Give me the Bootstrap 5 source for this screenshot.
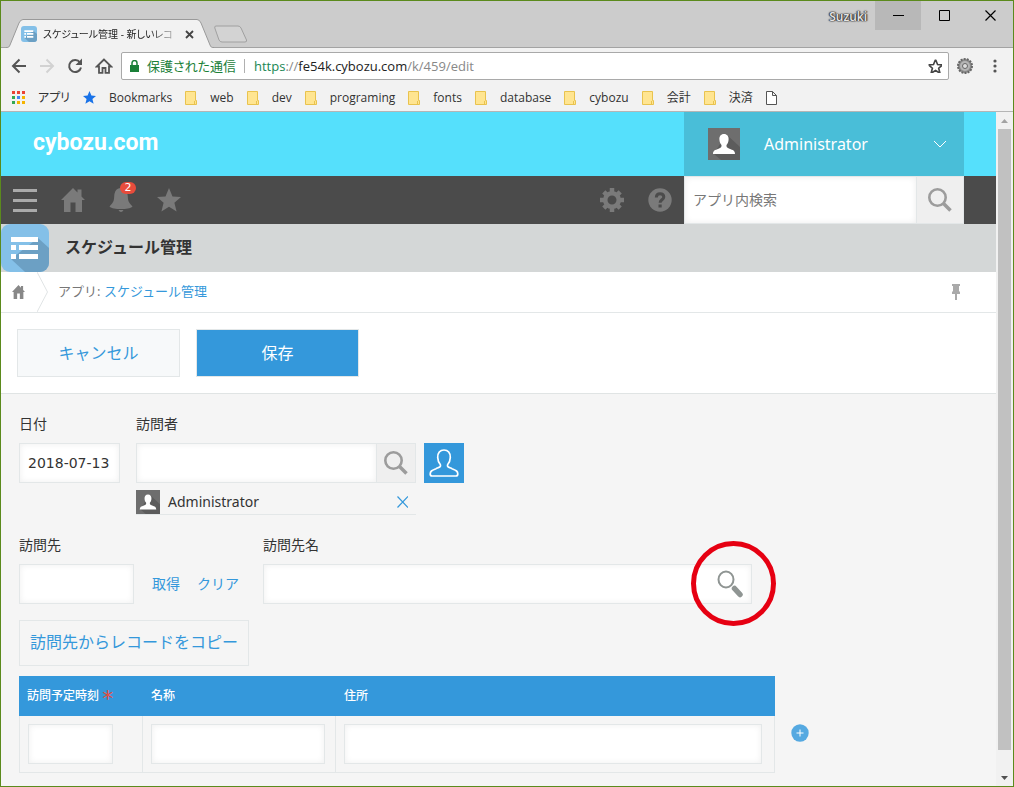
<!DOCTYPE html>
<html lang="ja">
<head>
<meta charset="utf-8">
<meta name="viewport" content="width=device-width, initial-scale=1">
<title>スケジュール管理 - 新しいレコード</title>
<link href="https://cdn.jsdelivr.net/npm/bootstrap@5.3.0/dist/css/bootstrap.min.css" rel="stylesheet">
<style>
  :root { --kt-blue: #3498db; --kt-line: #e3e7e8; --kt-ink: #333; }
  body { font-family: "Noto Sans", "Noto Sans CJK JP", sans-serif; font-size: 14px; line-height: 20px; color: var(--kt-ink); }
  a { color: var(--kt-blue); text-decoration: none; }
  svg { display: block; flex: none; }
  button { font: inherit; color: inherit; border: 0; background: none; padding: 0; }
  .window { min-height: 100vh; border: 1px solid #5b8a1c; background: #f2f2f2; }

  /* browser chrome */
  .chrome { font-family: "Open Sans", "Noto Sans CJK JP", sans-serif; font-size: 12px; line-height: 16px; font-feature-settings: "palt"; }
  .tab-strip { height: 47px; background: #ccc; border-bottom: 1px solid #a3a3a3; padding-left: 5px; }
  .page-tab { width: 208px; height: 29px; margin-bottom: -1px; padding: 1px 20px 0 15px; }
  .tab-shape { position: absolute; left: 0; top: 0; }
  .tab-title { font-size: 10px; margin-left: 6px; white-space: nowrap; color: #222; -webkit-mask-image: linear-gradient(to right, #000 108px, transparent 140px); }
  .profile { font-weight: 600; color: #e4e4e4; text-shadow: 0 0 1px #333, 0 0 2px #333, 1px 0 1px #444, -1px 0 1px #444; margin: 8px 8px 0 0; }
  .win-btn { width: 46px; height: 29px; }
  .win-btn.lit { background: #b8b8b8; }
  .tool-row { height: 36px; padding: 0 14px 0 10px; }
  .omnibox { height: 28px; background: #fff; border: 1px solid #a9a9a9; border-radius: 2px; font-size: 13px; line-height: 18px; padding: 0 6px 0 4px; margin-left: 8px; }
  .secure { color: #1a8038; border-right: 1px solid #b0b0b0; padding-right: 8px; margin-right: 9px; line-height: 14px; }
  .host { color: #222; }
  .rest { color: #888; }
  .bm-row { height: 28px; border-bottom: 1px solid #b5b5b5; gap: 13px; padding-left: 11px; }
  .bm-row a { gap: 13px; color: #333; white-space: nowrap; }

  /* portal header */
  .brand-bar { height: 64px; background: #55e0fc; padding: 0 32px; }
  .brand { color: #fff; font: 700 23px/32px "Roboto", sans-serif; padding-bottom: 2px; }
  .side-box { width: 280px; }
  .user-box { background: #49bed8; color: #fff; font-size: 16px; padding: 0 16px 0 24px; }
  .nav-dark { height: 48px; background: #4b4b4b; padding: 0 32px 0 11px; }
  .find-input { border: 1px solid var(--kt-line); background: #fff; box-shadow: inset 0 0 6px rgba(0,0,0,.08); padding: 0 8px; min-width: 0; outline: 0; }
  .find-input::placeholder { color: #777; }
  .find-btn { background: #efefef; border: 1px solid var(--kt-line); border-left: 0; display: flex; align-items: center; justify-content: center; }
  .nav-dark .find-btn { width: 47px; }
  .w-visitor .find-btn { width: 39px; }
  .count { position: absolute; left: 11px; top: -6px; width: 16px; height: 12px; border-radius: 6px; background: #e74c3c; color: #fff; font: 11px/12px "DejaVu Sans", sans-serif; text-align: center; }
  .app-bar { height: 48px; background: #d4d7d7; font-size: 16px; font-weight: 700; line-height: 24px; }
  .app-bar span { padding-bottom: 2px; }
  .crumbs { height: 41px; background: #fff; border-bottom: 1px solid var(--kt-line); font-size: 13px; color: #777; padding-left: 11px; }
  .crumb-text { margin-left: 9px; padding-bottom: 2px; }
  .actions { background: #fff; border-bottom: 1px solid #e0e4e4; padding: 16px; gap: 16px; }
  .act { width: 163px; height: 48px; border: 1px solid var(--kt-line); background: #f7f9fa; color: var(--kt-blue); font-size: 16px; }
  .act.save { background: var(--kt-blue); color: #fff; }

  /* record form */
  .record { background: #f5f5f5; padding: 20px 18px 13px; }
  .record label { display: block; margin-bottom: 9px; }
  .field { height: 40px; border: 1px solid var(--kt-line); background: #fff; box-shadow: inset 0 0 6px rgba(0,0,0,.07); border-radius: 0; padding: 0 8px; outline: 0; color: var(--kt-ink); }
  .w-date { width: 101px; font-family: "DejaVu Sans", sans-serif; }
  .w-visitor { width: 280px; }
  .w-dest { width: 115px; }
  .w-name { width: 489px; padding: 0 7px 0 0; }
  .picked { height: 25px; border-bottom: 1px solid var(--kt-line); margin-top: 7px; }
  .pick-user { width: 40px; height: 40px; background: var(--kt-blue); }
  .second-row { margin-top: 20px; gap: 24px; }
  .dest-links { gap: 17px; margin-left: 18px; }
  .bare { border: 0; background: transparent; outline: 0; padding: 0 8px; }
  .ring { position: absolute; right: -25px; top: -24px; pointer-events: none; }
  .copy { height: 46px; padding: 0 10px 2px; border: 1px solid var(--kt-line); color: var(--kt-blue); font-size: 16px; margin-top: 16px; }
  .rows { width: 756px; table-layout: fixed; border-collapse: separate; border-spacing: 0; margin-top: 10px; }
  .rows th { height: 40px; background: var(--kt-blue); color: #fff; font-size: 12px; font-weight: 500; padding: 0 8px; white-space: nowrap; }
  .rows td { border: solid var(--kt-line); border-width: 0 1px 1px 0; padding: 8px; line-height: 0; }
  .rows td:first-child { border-left-width: 1px; }
  .rows td .field { line-height: 20px; }
  .c-time { width: 124px; }
  .c-name { width: 193px; }
  .w-time { width: 85px; }
  .w-label { width: 174px; }
  .w-addr { width: 418px; }
  .req { color: #e74c3c; font: 400 22px/12px "DejaVu Sans", sans-serif; vertical-align: -6px; }
  .add-row { margin: 0 0 31px 16px; }

  /* page scrollbar */
  .scroll-rail { width: 17px; background: #f1f1f1; }
  .scroll-rail button { height: 17px; }
  .thumb { flex: 97 0 0; width: 13px; background: #c1c1c1; }
  .track-end { flex: 3 0 0; }
</style>
</head>
<body>
<svg width="0" height="0" class="position-absolute" aria-hidden="true">
  <symbol id="folder" viewBox="0 0 12 14"><path d="M.5.5h10v9h1v4H.5z" fill="#ffe591" stroke="#e9c34e"/><path d="M9.5 13.500v-3.500" stroke="#e9c34e"/></symbol>
  <symbol id="lens" viewBox="0 0 24 24"><circle cx="9.500" cy="9.500" r="8.200" fill="none" stroke="#9c9c9c" stroke-width="2.600"/><path d="m15.500 15.500 7 7" stroke="#9c9c9c" stroke-width="3.600"/></symbol>
  <symbol id="face" viewBox="0 0 32 32"><path d="M0 0h32v32H0z" fill="#6e6e6e"/><path d="m18 6 14 13v13H13l-7-6z" fill="#5c5c5c"/><path d="M16 6c3.200 0 4.800 2.400 4.600 5.600-.1 2.500-1 4.200-2.100 5.400-.3 2 .5 2.700 3 3.700 3.500 1.300 5.500 1.800 5.500 5.300H5c0-3.500 2-4 5.500-5.300 2.500-1 3.300-1.700 3-3.700-1.100-1.200-2-2.900-2.100-5.400C11.200 8.400 12.800 6 16 6z" fill="#fff"/></symbol>
  <symbol id="house" viewBox="0 0 24 24"><path d="M12 0 0 12h3v12h6.500V14.500h5V24H21V12h3l-3.500-3.500V1.500h-4v3z"/></symbol>
  <symbol id="list" viewBox="0 0 48 48"><rect width="48" height="48" rx="9" fill="#84c0e8"/><path d="M37 14l11 10v15a9 9 0 0 1-9 9H24L10 35z" fill="#6ca0c4"/><path d="M10 13h27v5H10zM10 21h5v5h-5zM18 21h19v5H18zM10 30h5v5h-5zM18 30h19v5H18z" fill="#fff"/></symbol>
  <symbol id="star" viewBox="0 0 24 24"><path d="m12 0 3.500 8.500 8.500.6-6.600 5.700 2.200 8.700L12 18.800l-7.600 4.700 2.200-8.700L0 9.100l8.500-.6z"/></symbol>
</svg>

<div class="window d-flex flex-column">
  <header class="chrome">
    <div class="tab-strip d-flex">
      <div class="page-tab position-relative d-flex align-items-center align-self-end">
        <svg class="tab-shape" width="208" height="29" viewBox="0 0 208 29"><path d="M0 29C3 28.500 3 28 4 26L13 4Q14.500.5 17 .5H191q2.500 0 4 3.500l9 22c1 2 1 2.500 4 3z" fill="#f2f2f2"/><path d="M0 28.500C3 28.500 3 28 4 26L13 4Q14.500.5 17 .5H191q2.500 0 4 3.500l9 22c1 2 1 2.500 4 2.500" fill="none" stroke="#9a9a9a"/></svg>
        <svg class="position-relative" width="16" height="16"><use href="#list"/></svg>
        <span class="tab-title position-relative">スケジュール管理 - 新しいレコ</span>
        <button class="position-relative ms-auto" aria-label="タブを閉じる"><svg width="9" height="9" viewBox="0 0 9 9"><path d="m1 1 7 7M8 1 1 8" stroke="#444" stroke-width="1.800"/></svg></button>
      </div>
      <button class="align-self-end mb-1 ms-n1" aria-label="新しいタブ"><svg class="me-1" width="35" height="18" viewBox="4 0 35 18"><path d="M6 1h22q2 0 3 2l5.500 12q.5 2-1.500 2H12q-2 0-3-2L4.800 3Q4.300 1 6 1z" fill="#d3d3d3" stroke="#a0a0a0"/></svg></button>
      <span class="profile ms-auto">Suzuki</span>
      <button class="win-btn lit" aria-label="最小化"><svg class="mx-auto" width="11" height="11"><path d="M0 5.500h11" stroke="#000"/></svg></button>
      <button class="win-btn" aria-label="最大化"><svg class="mx-auto" width="11" height="11"><path d="M.5.5h10v10H.5z" fill="none" stroke="#000"/></svg></button>
      <button class="win-btn" aria-label="閉じる"><svg class="mx-auto" width="11" height="11"><path d="m.5.5 10 10M10.500.5l-10 10" stroke="#000" stroke-width="1.200"/></svg></button>
    </div>
    <div class="tool-row d-flex align-items-center">
      <div class="d-flex align-items-center gap-2">
        <button class="me-1" aria-label="戻る"><svg width="16" height="16" viewBox="0 0 16 16" fill="none" stroke="#555" stroke-width="2"><path d="M15 8H3M8.500 1.500 2 8l6.500 6.500"/></svg></button>
        <button class="me-1" aria-label="進む"><svg width="16" height="16" viewBox="0 0 16 16" fill="none" stroke="#d2d2d2" stroke-width="2"><path d="M1 8h12M7.500 1.500 14 8l-6.500 6.500"/></svg></button>
        <button class="me-1" aria-label="再読み込み"><svg width="16" height="16" viewBox="0 0 16 16"><path d="M13 4.500A6 6 0 1 0 14 9.500" fill="none" stroke="#555" stroke-width="2"/><path d="M15 .5V7H8.500z" fill="#555"/></svg></button>
        <button aria-label="ホーム"><svg width="18" height="16" viewBox="0 0 18 16"><path d="M9 1.500 1.800 8.500H4v6.300h3.500V10h3v4.800H14V8.500h2.200z" fill="none" stroke="#555" stroke-width="1.800"/></svg></button>
      </div>
      <div class="omnibox d-flex align-items-center flex-grow-1">
        <svg class="me-2 ms-1" width="9" height="12" viewBox="0 0 9 12"><path d="M0 5h9v7H0z" fill="#1a8038"/><path d="M2 5V3a2.500 2.500 0 0 1 5 0v2" fill="none" stroke="#1a8038" stroke-width="1.500"/></svg>
        <span class="secure">保護された通信</span>
        <span class="rest flex-grow-1"><span class="text-success">https</span>://<span class="host">fe54k.cybozu.com</span>/k/459/edit</span>
        <button aria-label="ブックマークに追加"><svg width="14" height="14" viewBox="-1 -1 26 26" fill="none" stroke="#444" stroke-width="2.800"><use href="#star"/></svg></button>
      </div>
      <svg class="ms-2" width="16" height="16" viewBox="0 0 16 16"><circle cx="8" cy="8" r="7" fill="#8c8c8c" stroke="#666" stroke-width="2" stroke-dasharray="2 1.140"/><circle cx="8" cy="8" r="5" fill="#b5b5b5"/><circle cx="8" cy="8" r="2.500" fill="#ddd" stroke="#666"/></svg>
      <button class="ms-3 ps-1" aria-label="メニュー"><svg width="6" height="14" fill="#555"><circle cx="2" cy="2" r="1.600"/><circle cx="2" cy="7" r="1.600"/><circle cx="2" cy="12" r="1.600"/></svg></button>
    </div>
    <nav class="bm-row d-flex align-items-center" aria-label="ブックマーク">
      <a href="#" class="d-flex align-items-center"><svg width="13" height="13"><path d="M0 0h3v3H0zM5 0h3v3H5zM10 0h3v3h-3z" fill="#ea4335"/><path d="M0 5h3v3H0z" fill="#34a853"/><path d="M5 5h3v3H5z" fill="#4285f4"/><path d="M10 5h3v3h-3zM5 10h3v3H5zM10 10h3v3h-3z" fill="#f5b400"/><path d="M0 10h3v3H0z" fill="#34a853"/></svg>アプリ</a>
      <a href="#" class="d-flex align-items-center"><svg width="13" height="13" viewBox="0 0 24 24" fill="#1a73e8"><use href="#star"/></svg>Bookmarks</a>
      <a href="#" class="d-flex align-items-center"><svg width="12" height="14"><use href="#folder"/></svg>web</a>
      <a href="#" class="d-flex align-items-center"><svg width="12" height="14"><use href="#folder"/></svg>dev</a>
      <a href="#" class="d-flex align-items-center"><svg width="12" height="14"><use href="#folder"/></svg>programing</a>
      <a href="#" class="d-flex align-items-center"><svg width="12" height="14"><use href="#folder"/></svg>fonts</a>
      <a href="#" class="d-flex align-items-center"><svg width="12" height="14"><use href="#folder"/></svg>database</a>
      <a href="#" class="d-flex align-items-center"><svg width="12" height="14"><use href="#folder"/></svg>cybozu</a>
      <a href="#" class="d-flex align-items-center"><svg width="12" height="14"><use href="#folder"/></svg>会計</a>
      <a href="#" class="d-flex align-items-center"><svg width="12" height="14"><use href="#folder"/></svg>決済</a>
      <a href="#" aria-label="ページ"><svg width="11" height="14" viewBox="0 0 11 14" fill="#fff" stroke="#555"><path d="M.5.5h6l4 4v9H.5zM6.500.5v4h4"/></svg></a>
    </nav>
  </header>

  <div class="d-flex flex-grow-1">
    <div class="d-flex flex-column flex-grow-1">
      <div class="brand-bar d-flex align-items-center justify-content-between">
        <a href="#" class="brand">cybozu.com</a>
        <button class="side-box user-box d-flex align-items-center align-self-stretch">
          <svg width="32" height="32"><use href="#face"/></svg>
          <span class="ms-4">Administrator</span>
          <svg class="ms-auto" width="16" height="8" viewBox="0 0 16 8"><path d="m2 1 6 6 6-6" fill="none" stroke="#fff"/></svg>
        </button>
      </div>
      <nav class="nav-dark d-flex align-items-center">
        <div class="d-flex align-items-center gap-4 flex-grow-1">
          <button aria-label="メニューを開く"><svg width="25" height="24" fill="#aaa"><path d="M1 1h24v3H1zM1 11h24v3H1zM1 21h24v3H1z"/></svg></button>
          <button aria-label="ポータル"><svg width="24" height="24" fill="#7a7a7a"><use href="#house"/></svg></button>
          <button class="position-relative" aria-label="通知 2件"><svg width="24" height="24" viewBox="0 0 24 24" fill="#7a7a7a"><path d="M12 0C7 0 5.500 4 5.200 8.500 5 14 3.500 15 .5 18.500c2 2 6.500 2.500 11.500 2.500s9.500-.5 11.500-2.500c-3-3.500-4.500-4.500-4.700-10C18.500 4 17 0 12 0zM9.500 22h5q-1 2-2.500 2t-2.500-2z"/></svg><span class="count">2</span></button>
          <button aria-label="お気に入り"><svg width="24" height="24" fill="#7a7a7a"><use href="#star"/></svg></button>
        </div>
        <button class="me-4" aria-label="設定"><svg width="24" height="24" viewBox="0 0 24 24"><circle cx="12" cy="12" r="6.800" fill="none" stroke="#7a7a7a" stroke-width="4.600"/><path d="M12 0v4M12 20v4M0 12h4M20 12h4M3.800 3.800l2.500 2.500M17.700 17.700l2.500 2.500M3.800 20.200l2.500-2.500M17.700 6.300l2.500-2.500" stroke="#7a7a7a" stroke-width="4.500"/></svg></button>
        <button class="me-2 pe-1" aria-label="ヘルプ"><svg width="24" height="24" viewBox="0 0 24 24"><circle cx="12" cy="12" r="11.700" fill="#7a7a7a"/><path d="M8.300 9.500C8.500 6.500 10 5.800 12 5.800c2.300 0 3.800 1.200 3.800 3.200 0 2.800-3.700 2.700-3.700 5.700" fill="none" stroke="#4b4b4b" stroke-width="3"/><path d="M10.500 16.500h3.200v3h-3.200z" fill="#4b4b4b"/></svg></button>
        <div class="side-box d-flex align-self-stretch">
          <input class="find-input flex-grow-1" type="search" placeholder="アプリ内検索" aria-label="アプリ内検索">
          <button class="find-btn" aria-label="検索"><svg width="24" height="24"><use href="#lens"/></svg></button>
        </div>
      </nav>
      <div class="app-bar d-flex align-items-center"><svg width="48" height="48"><use href="#list"/></svg><span class="ms-3">スケジュール管理</span></div>
      <nav class="crumbs d-flex align-items-center" aria-label="パンくず">
        <a href="#" class="me-2" aria-label="ホーム"><svg width="13" height="14" viewBox="0 0 24 24" preserveAspectRatio="none" fill="#888"><use href="#house"/></svg></a>
        <svg class="ms-1" width="12" height="40"><path d="m0 0 10.500 20L0 40" fill="none" stroke="#e0e4e5"/></svg>
        <span class="crumb-text">アプリ: <a href="#">スケジュール管理</a></span>
        <button class="ms-auto me-4 px-2" aria-label="ピン留め"><svg class="me-1" width="8" height="16" viewBox="0 0 8 16" fill="#aaa"><path d="M0 0h8v2H7v5l1 1v2H5v6H3v-6H0V8l1-1V2H0z"/></svg></button>
      </nav>
      <div class="actions d-flex">
        <button class="act">キャンセル</button>
        <button class="act save">保存</button>
      </div>

      <main class="record flex-grow-1">
        <div class="d-flex gap-3">
          <div>
            <label for="date">日付</label>
            <input id="date" class="field w-date" type="text" value="2018-07-13">
          </div>
          <div>
            <label for="visitor">訪問者</label>
            <div class="d-flex gap-2">
              <div class="w-visitor d-flex">
                <input id="visitor" class="field flex-grow-1" type="text">
                <button class="find-btn" aria-label="訪問者を検索"><svg width="24" height="24"><use href="#lens"/></svg></button>
              </div>
              <button class="pick-user" aria-label="ユーザーを選択"><svg class="mx-auto" width="30" height="30" viewBox="0 0 30 30"><path d="M15 2c4 0 6.500 3 6.300 7.500-.1 3.500-1.300 5.500-2.600 7-.9 2.300.6 2.500 4.300 4.200 4 1.700 5.800 2.300 5.800 5.300 0 1.500-.8 2-2 2H3.200c-1.200 0-2-.5-2-2 0-3 1.800-3.600 5.800-5.300 3.700-1.700 5.200-1.900 4.300-4.200-1.300-1.500-2.500-3.500-2.600-7C8.500 5 11 2 15 2z" fill="none" stroke="#fff" stroke-width="1.700"/></svg></button>
            </div>
            <div class="picked w-visitor d-flex align-items-center">
              <svg width="24" height="24"><use href="#face"/></svg>
              <span class="ms-2">Administrator</span>
              <button class="ms-auto pe-1" aria-label="Administratorを削除"><svg class="me-1" width="12" height="12" viewBox="-1 0 12 12"><path d="m.5.5 10.500 11M11 .5l-10.500 11" stroke="#3498db" stroke-width="1.200"/></svg></button>
            </div>
          </div>
        </div>
        <div class="second-row d-flex">
          <div>
            <label for="dest">訪問先</label>
            <div class="d-flex align-items-center">
              <input id="dest" class="field w-dest" type="text">
              <div class="dest-links d-flex"><a href="#">取得</a><a href="#">クリア</a></div>
            </div>
          </div>
          <div>
            <label for="name">訪問先名</label>
            <div class="field w-name d-flex align-items-center position-relative">
              <input id="name" class="bare flex-grow-1" type="text">
              <button aria-label="訪問先名を検索"><svg width="27" height="28" viewBox="0 0 27 28"><ellipse cx="9" cy="9.500" rx="7.500" ry="8" fill="none" stroke="#8f9593" stroke-width="2"/><path d="m17.500 18.500 5.500 6" stroke="#8f9593" stroke-width="5.500" stroke-linecap="round"/></svg></button>
              <svg class="ring" width="85" height="85"><circle cx="42.500" cy="42.500" r="40" fill="none" stroke="#e60012" stroke-width="5"/></svg>
            </div>
          </div>
        </div>
        <button class="copy">訪問先からレコードをコピー</button>
        <div class="d-flex align-items-end">
          <table class="rows">
            <colgroup><col class="c-time"><col class="c-name"><col></colgroup>
            <thead><tr><th scope="col">訪問予定時刻 <span class="req">*</span></th><th scope="col">名称</th><th scope="col">住所</th></tr></thead>
            <tbody><tr>
              <td><input class="field w-time" type="text" aria-label="訪問予定時刻"></td>
              <td><input class="field w-label" type="text" aria-label="名称"></td>
              <td><input class="field w-addr" type="text" aria-label="住所"></td>
            </tr></tbody>
          </table>
          <button class="add-row" aria-label="行を追加"><svg width="18" height="18" viewBox="0 0 18 18"><circle cx="9" cy="9" r="8.700" fill="#55a9e1"/><path d="M9 5.500v7M5.500 9h7" stroke="#fff"/></svg></button>
        </div>
      </main>
    </div>
    <div class="scroll-rail d-flex flex-column align-items-center">
      <button aria-label="上へスクロール"><svg width="7" height="4"><path d="M0 4 3.500 0 7 4z" fill="#a3a3a3"/></svg></button>
      <div class="thumb"></div>
      <div class="track-end"></div>
      <button aria-label="下へスクロール"><svg width="7" height="4"><path d="m0 0 3.500 4L7 0z" fill="#505050"/></svg></button>
    </div>
  </div>
</div>
<script src="https://cdn.jsdelivr.net/npm/bootstrap@5.3.0/dist/js/bootstrap.bundle.min.js"></script>
</body>
</html>
